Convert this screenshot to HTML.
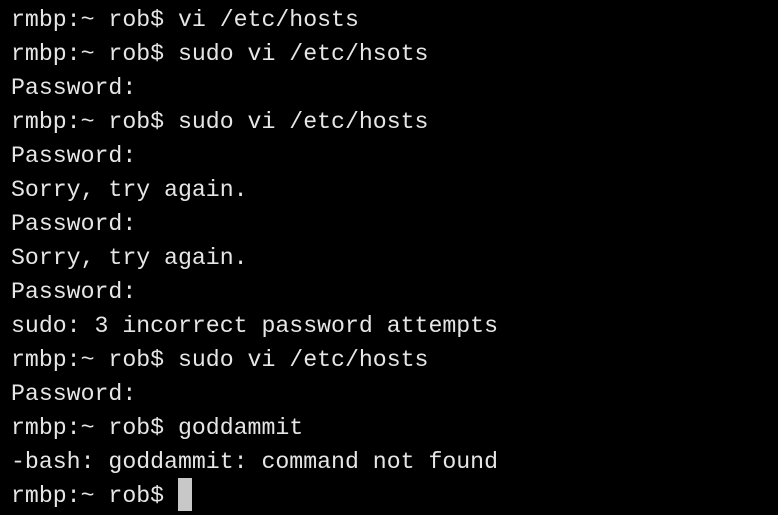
<!DOCTYPE html><html><head><style>
body{margin:0;background:#000;width:778px;height:515px;overflow:hidden}
pre{margin:0;position:absolute;left:11px;top:3px;font-family:"Liberation Mono",monospace;font-size:23.2px;line-height:34px;color:#e6e6e6}
.c{display:inline-block;width:14px;height:33px;background:#c8c8c8;vertical-align:top;margin-top:-1px}
</style></head><body><pre>rmbp:~ rob$ vi /etc/hosts
rmbp:~ rob$ sudo vi /etc/hsots
Password:
rmbp:~ rob$ sudo vi /etc/hosts
Password:
Sorry, try again.
Password:
Sorry, try again.
Password:
sudo: 3 incorrect password attempts
rmbp:~ rob$ sudo vi /etc/hosts
Password:
rmbp:~ rob$ goddammit
-bash: goddammit: command not found
rmbp:~ rob$ <span class="c"></span></pre></body></html>
